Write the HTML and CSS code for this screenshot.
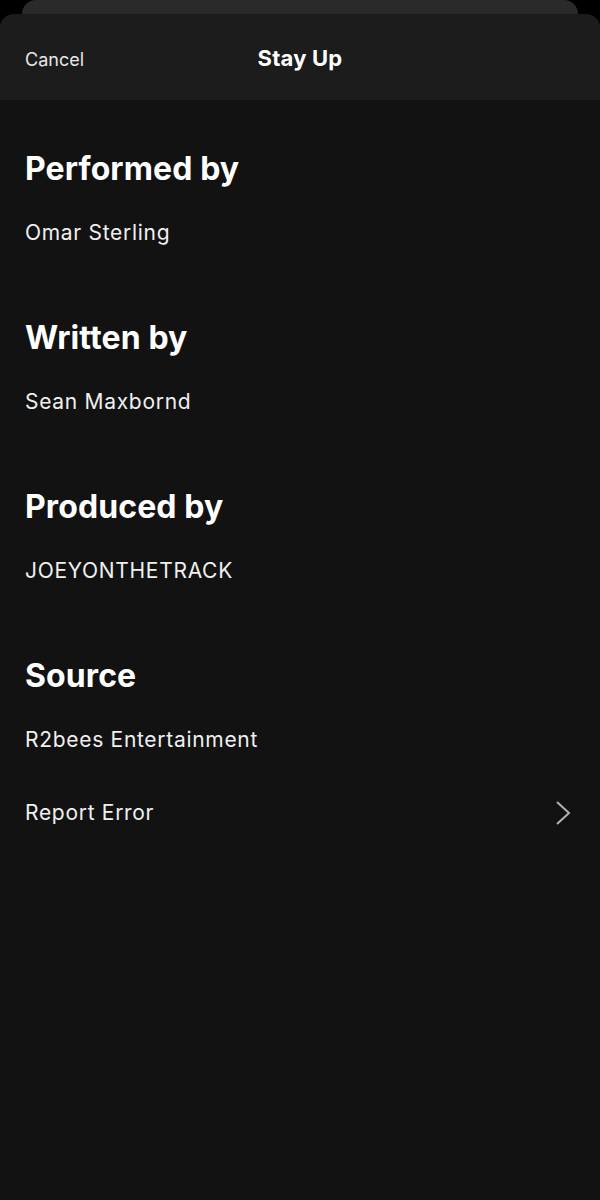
FILE: index.html
```html
<!DOCTYPE html>
<html lang="en">
  <head>
    <meta charset="UTF-8" />
    <meta name="viewport" content="width=device-width, initial-scale=1.0" />
    <title>Stay Up - Credits</title>
    <link rel="stylesheet" href="styles.css">
  </head>
  <body>
    <div class="back-card"></div>

    <div class="sheet">
      <div class="sheet-header">
        <span class="cancel">Cancel</span>
        <span class="title">Stay Up</span>
      </div>

      <div class="credits">
        <div class="credit">
          <h2>Performed by</h2>
          <p>Omar Sterling</p>
        </div>
        <div class="credit">
          <h2>Written by</h2>
          <p>Sean Maxbornd</p>
        </div>
        <div class="credit">
          <h2>Produced by</h2>
          <p>JOEYONTHETRACK</p>
        </div>
        <div class="credit credit-last">
          <h2>Source</h2>
          <p>R2bees Entertainment</p>
        </div>

        <div class="report">
          <span>Report Error</span>
          <svg width="18" height="26" viewBox="0 0 18 26">
            <path d="M3 2 L15 13 L3 24" fill="none" stroke="#b3b3b3" stroke-width="2" />
          </svg>
        </div>
      </div>
    </div>
  </body>
</html>
```

FILE: styles.css
```css
body {
  margin: 0;
  background-color: #000000;
  font-family: "Inter", "Liberation Sans", sans-serif;
  color: #ffffff;
}
.back-card {
  height: 14px;
  margin-inline: 22px;
  background-color: #2a2a2a;
  border-radius: 16px 16px 0 0;
}
.sheet {
  min-height: 1186px;
  background-color: #121212;
  border-radius: 14px 14px 0 0;
  overflow: hidden;
}
.sheet-header {
  position: relative;
  display: flex;
  align-items: center;
  justify-content: center;
  height: 86px;
  padding-top: 2px;
  box-sizing: border-box;
  background-color: #1c1c1c;
}
.cancel {
  position: absolute;
  left: 25px;
  padding-top: 2px;
  font-size: 18px;
  color: #e8e8e8;
}
.title {
  font-size: 22px;
  font-weight: bold;
  letter-spacing: 0.2px;
}
.credits {
  padding: 49px 25px 0 25px;
}
.credit {
  margin-bottom: 71px;
}
.credit h2 {
  margin: 0;
  font-size: 32px;
  line-height: 40px;
  font-weight: bold;
  letter-spacing: 0.1px;
}
.credit p {
  margin: 30px 0 0 0;
  font-size: 21px;
  line-height: 28px;
  letter-spacing: 0.7px;
  color: #f0f0f0;
}
.credit-last {
  margin-bottom: 45px;
}
.report {
  display: flex;
  align-items: center;
  justify-content: space-between;
  font-size: 21px;
  line-height: 28px;
  letter-spacing: 0.7px;
  color: #f0f0f0;
}
.report svg {
  margin-right: 3px;
}
```
